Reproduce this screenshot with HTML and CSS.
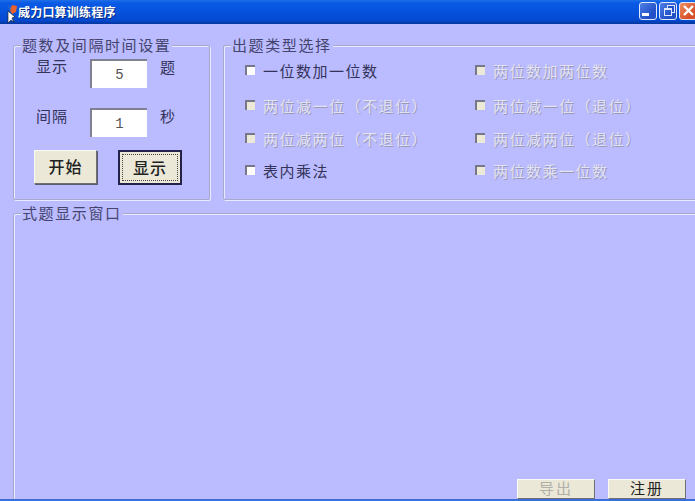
FILE: index.html
```html
<!DOCTYPE html>
<html lang="zh-CN">
<head>
    <meta charset="UTF-8">
    <title>威力口算训练程序</title>
    <link rel="stylesheet" href="styles.css">
</head>
<body>
    <div class="window">
        <!-- Title bar -->
        <div class="title-bar">
            <svg class="app-icon" width="16" height="20" viewBox="0 0 16 20">
                <path d="M9 2 L14 3 L13 9 L9 11 L7 7 Z" fill="#e8602c"/>
                <path d="M5 3 L8 5 L7 8 Z" fill="#3c6cc0"/>
                <path d="M5 8 L5 20 L8 17 L11 19 L9 15 L12 14 Z" fill="#fff" stroke="#222" stroke-width="0.7"/>
            </svg>
            <span class="title-text">威力口算训练程序</span>
            <div class="title-buttons">
                <div class="tb-btn"><span class="tb-min"></span></div>
                <div class="tb-btn"><span class="tb-restore"></span></div>
                <div class="tb-btn tb-close">
                    <svg width="13" height="13" viewBox="0 0 13 13"><path d="M2 2 L11 11 M11 2 L2 11" stroke="#fff" stroke-width="2.4"/></svg>
                </div>
            </div>
        </div>

        <div class="client">
            <div class="top-row">
                <!-- Settings -->
                <div class="group settings">
                    <div class="legend">题数及间隔时间设置</div>
                    <div class="setting-row first">
                        <span class="setting-label">显示</span>
                        <div class="num-box">5</div>
                        <span class="setting-unit">题</span>
                    </div>
                    <div class="setting-row second">
                        <span class="setting-label">间隔</span>
                        <div class="num-box">1</div>
                        <span class="setting-unit">秒</span>
                    </div>
                    <div class="action-row">
                        <button class="btn">开始</button>
                        <button class="btn btn-default"><span>显示</span></button>
                    </div>
                </div>

                <!-- Question types -->
                <div class="group types">
                    <div class="legend">出题类型选择</div>
                    <div class="type-grid">
                        <div class="type-item row1"><i class="cb"></i>一位数加一位数</div>
                        <div class="type-item row1 off"><i class="cb"></i>两位数加两位数</div>
                        <div class="type-item row2 off"><i class="cb"></i>两位减一位（不退位）</div>
                        <div class="type-item row2 off"><i class="cb"></i>两位减一位（退位）</div>
                        <div class="type-item row3 off"><i class="cb"></i>两位减两位（不退位）</div>
                        <div class="type-item row3 off"><i class="cb"></i>两位减两位（退位）</div>
                        <div class="type-item row4"><i class="cb"></i>表内乘法</div>
                        <div class="type-item row4 off"><i class="cb"></i>两位数乘一位数</div>
                    </div>
                </div>
            </div>

            <!-- Output -->
            <div class="group output">
                <div class="legend">式题显示窗口</div>
                <div class="bottom-buttons">
                    <button class="btn-small off">导出</button>
                    <button class="btn-small">注册</button>
                </div>
            </div>
        </div>
        <div class="bottom-line"></div>
    </div>
</body>
</html>
```

FILE: styles.css
```css
html, body {
    margin: 0;
    height: 100%;
    overflow: hidden;
}

body {
    font-family: "Noto Sans CJK SC", "Liberation Sans", sans-serif;
    font-size: 15px;
    color: #33335a;
    background-color: #bbbbff;
}

.window {
    display: flex;
    flex-direction: column;
    width: 695px;
    height: 501px;
    overflow: hidden;
}

/* title bar */
.title-bar {
    display: flex;
    align-items: center;
    flex: none;
    height: 24px;
    padding-left: 3px;
    box-sizing: border-box;
    background: linear-gradient(to bottom, #1f6fe8 0%, #0a5ae6 12%, #0652dc 50%, #0548cf 85%, #03369c 100%);
}

.app-icon {
    flex: none;
    margin-top: 2px;
}

.title-text {
    margin-left: -1px;
    margin-top: -1px;
    font-size: 12px;
    font-weight: bold;
    letter-spacing: 0.2px;
    color: #ffffff;
    text-shadow: 1px 1px 0 #0a2c80;
}

.title-buttons {
    display: flex;
    flex: none;
    gap: 2px;
    margin-left: auto;
    margin-top: -3px;
    margin-right: -2px;
}

.tb-btn {
    display: flex;
    align-items: center;
    justify-content: center;
    box-sizing: border-box;
    width: 18px;
    height: 18px;
    border: 1px solid #dfe8fa;
    border-radius: 3px;
    background: linear-gradient(135deg, #4f7fe6, #2250c8 70%);
}

.tb-close {
    background: linear-gradient(135deg, #ee9060, #d8502a 70%);
}

.tb-min {
    display: block;
    width: 7px;
    height: 3px;
    margin: 8px 6px 0 0;
    background-color: #ffffff;
}

.tb-restore {
    display: block;
    width: 6px;
    height: 5px;
    margin-top: 3px;
    border: 1px solid #dfe8fa;
    border-top-width: 2px;
    box-shadow: 3px -3px 0 -1px #2250c8, 3px -3px 0 0 #dfe8fa;
}

/* client area */
.client {
    display: flex;
    flex: 1;
    flex-direction: column;
    gap: 13px;
    min-height: 0;
    padding: 21px 0 0 13px;
}

.top-row {
    display: flex;
    flex: none;
    gap: 13px;
    height: 155px;
}

.group {
    position: relative;
    flex: none;
    box-sizing: border-box;
    border: 1px solid #a9a9cc;
    border-radius: 2px;
    box-shadow: 1px 1px 0 #e9e9ff, inset 1px 1px 0 #e9e9ff;
}

.legend {
    position: absolute;
    top: -10px;
    left: 7px;
    padding: 0 1px;
    line-height: 18px;
    letter-spacing: 1.6px;
    color: #44446e;
    background-color: #bbbbff;
}

/* settings group */
.settings {
    width: 197px;
    padding: 13px 0 0 22px;
}

.setting-row {
    display: flex;
    align-items: flex-start;
    height: 30px;
}

.setting-label {
    width: 54px;
    margin-top: -2px;
    line-height: 20px;
    letter-spacing: 1px;
}

.setting-row.first .setting-label {
    margin-top: -3px;
}

.setting-row.second {
    margin-top: 19px;
}

.setting-unit {
    margin-top: -2px;
    margin-left: 13px;
    line-height: 20px;
}

.num-box {
    box-sizing: border-box;
    width: 57px;
    height: 29px;
    border-top: 2px solid #808090;
    border-left: 2px solid #808090;
    font-family: "Liberation Mono", monospace;
    font-size: 14px;
    line-height: 28px;
    text-align: center;
    color: #555555;
    background-color: #ffffff;
}

.action-row {
    display: flex;
    gap: 21px;
    margin: 12px 0 0 -2px;
}

.btn {
    box-sizing: border-box;
    width: 63px;
    height: 34px;
    padding: 0 0 2px;
    border: 1px solid;
    border-color: #fbfbf5 #6f6f70 #6f6f70 #fbfbf5;
    box-shadow: 1px 1px 0 #5c5c70;
    font-family: inherit;
    font-size: 16px;
    font-weight: 500;
    letter-spacing: 1px;
    color: #222222;
    background-color: #ebe8d8;
}

.btn-default {
    width: 64px;
    height: 35px;
    padding: 0;
    border: 2px solid #22224a;
    box-shadow: none;
}

.btn-default span {
    display: block;
    margin: 2px;
    line-height: 25px;
    border: 1px dotted #444444;
}

/* question types */
.types {
    width: 480px;
}

.type-grid {
    display: grid;
    grid-template-columns: 230px 1fr;
    padding: 13px 0 0 21px;
}

.type-item {
    display: flex;
    align-items: center;
    gap: 8px;
    height: 22px;
    letter-spacing: 1.5px;
    color: #33335a;
}

.row2 { margin-top: 13px; }
.row3 { margin-top: 11px; }
.row4 { margin-top: 10px; }

.cb {
    flex: none;
    box-sizing: border-box;
    width: 10px;
    height: 10px;
    border-top: 2px solid #77778a;
    border-left: 2px solid #77778a;
    background-color: #fdfdfd;
}

.off {
    color: #e2e2f4;
    text-shadow: 1px 1px 0 #9a9ab8;
}

.off .cb {
    background-color: #ece9d8;
}

/* output group */
.output {
    width: 720px;
    height: 310px;
}

.bottom-buttons {
    position: absolute;
    top: 265px;
    left: 503px;
    display: flex;
    gap: 13px;
}

.btn-small {
    box-sizing: border-box;
    width: 78px;
    height: 20px;
    padding: 0 0 2px;
    border: 1px solid;
    border-color: #fbfbf5 #6f6f70 #6f6f70 #fbfbf5;
    font-family: inherit;
    font-size: 15px;
    line-height: 16px;
    letter-spacing: 2px;
    color: #222222;
    background-color: #ebe8d8;
}

.btn-small.off {
    color: #b0b0a8;
    text-shadow: none;
}

.bottom-line {
    position: absolute;
    left: 0;
    top: 499px;
    width: 695px;
    height: 2px;
    background-color: #3a6ed8;
}
```
